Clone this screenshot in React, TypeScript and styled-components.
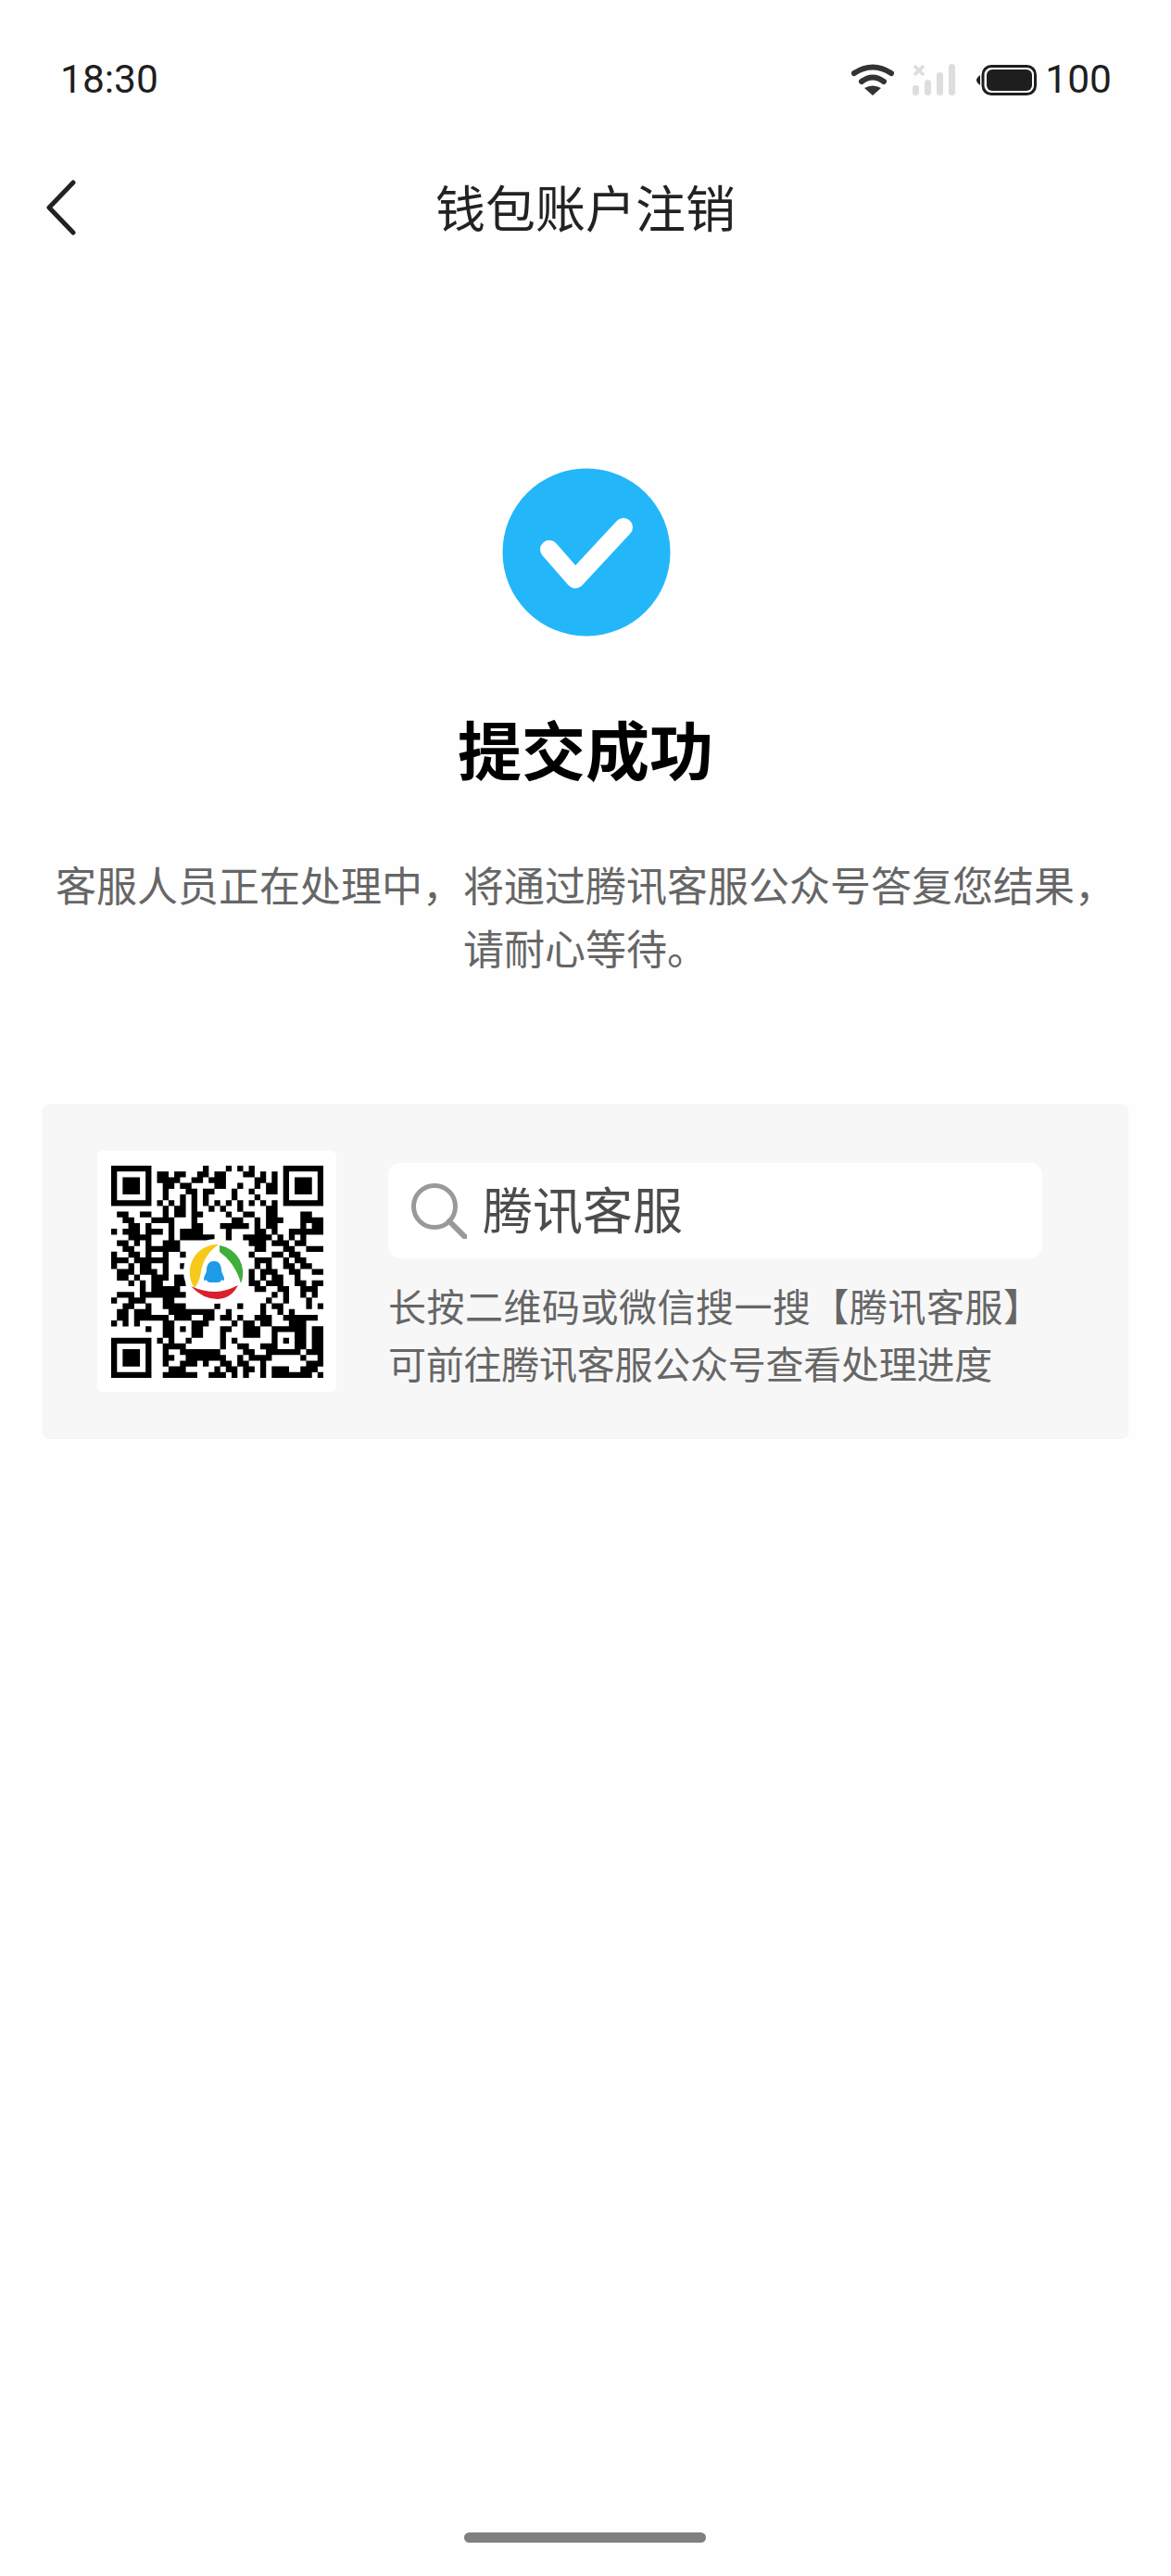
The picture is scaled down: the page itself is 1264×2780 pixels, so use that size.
import React from "react";
import styled, { createGlobalStyle } from "styled-components";

const CJK = `"Noto Sans CJK SC", "Noto Sans", sans-serif`;

const Global = createGlobalStyle`
  html, body { margin: 0; padding: 0; background: #fefefe; }
  * { box-sizing: border-box; }
`;

const Page = styled.div`
  width: 1264px;
  height: 2780px;
  display: flex;
  flex-direction: column;
  position: relative;
  background: #fefefe;
  font-family: ${CJK};
`;

const StatusBar = styled.div`
  height: 172px;
  padding: 64px 64px 64px 65px;
  display: flex;
  align-items: center;
  justify-content: space-between;
  font-family: Roboto, sans-serif;
  font-size: 42.5px;
  line-height: 44px;
  color: #1e1e1e;
`;

const StatusRight = styled.div`
  display: flex;
  align-items: center;
`;

const WifiIcon = styled.svg`
  width: 46px;
  height: 34px;
  margin-right: 19px;
`;

const SignalIcon = styled.svg`
  width: 47px;
  height: 34px;
  margin-right: 23px;
`;

const BatteryIcon = styled.svg`
  width: 65px;
  height: 33px;
  margin-right: 9px;
`;

const NavBar = styled.div`
  height: 108px;
  padding: 0 46px;
  display: grid;
  grid-template-columns: 1fr auto 1fr;
  align-items: center;
`;

const BackIcon = styled.svg`
  width: 40px;
  height: 64px;
`;

const NavTitle = styled.div`
  font-size: 54px;
  line-height: 70px;
  padding-bottom: 6px;
  color: #222;
`;

const Result = styled.div`
  display: flex;
  flex-direction: column;
  align-items: center;
  padding-top: 225px;
`;

const CheckIcon = styled.svg`
  width: 182px;
  height: 182px;
  margin-left: 2px;
`;

const ResultTitle = styled.h1`
  margin: 80px 0 0;
  font-size: 69px;
  line-height: 80px;
  font-weight: 700;
  color: #000;
`;

const ResultText = styled.p`
  margin: 73px 0 0;
  font-size: 44px;
  line-height: 68px;
  color: #666;
  text-align: center;
  white-space: nowrap;
`;

const ServiceCard = styled.div`
  margin: 136px 46px 0;
  height: 361px;
  padding: 49px 58px 0;
  display: flex;
  align-items: flex-start;
  gap: 56px;
  background: #f7f7f7;
  border: 1px solid #f4f4f4;
  border-radius: 8px;
`;

const QrFrame = styled.div`
  width: 258px;
  height: 260px;
  flex: none;
  display: flex;
  align-items: center;
  justify-content: center;
  background: #fff;
  border-radius: 6px;
`;

const QrSvg = styled.svg`
  width: 229px;
  height: 229px;
  filter: blur(0.7px);
`;

const ServiceInfo = styled.div`
  width: 706px;
  padding-top: 13px;
  display: flex;
  flex-direction: column;
  gap: 19px;
`;

const SearchBox = styled.div`
  height: 103px;
  padding: 0 0 5px 25px;
  display: flex;
  align-items: center;
  gap: 17px;
  background: #fff;
  border-radius: 14px;
`;

const SearchIcon = styled.svg`
  width: 60px;
  height: 60px;
  flex: none;
  margin-top: 5px;
`;

const SearchText = styled.span`
  font-size: 54px;
  line-height: 70px;
  color: #4c4c4c;
`;

const Hint = styled.div<{ $spacing: number }>`
  font-size: 41px;
  line-height: 62px;
  letter-spacing: ${(p) => p.$spacing}px;
  color: #666;
  white-space: nowrap;
`;

const HomeBar = styled.div`
  position: absolute;
  left: 501px;
  top: 2733px;
  width: 261px;
  height: 11px;
  border-radius: 6px;
  background: #808080;
`;

const QR_ROWS = [
  "16 20 22 24",
  "8-9 11-12 15-16 18-19 23-24 26 28",
  "8-11 14-15 17-19 25-26 28",
  "9-10 12-13 18-19 22 25 27-28",
  "9 13-14 16-17 21 24 27-28",
  "9 12 14 16 21 25",
  "8 10 12 14 16 18 20 22 24 26 28",
  "9 11-12 14 17 19 22 27-28",
  "1-2 5-6 9 11-12 14-15 20 23-24 27-28 33-34",
  "2-3 7-10 14 21-22 25 27-29 33-36",
  "3-4 6 10 14-15 19-23 25 27-28 33 35-36",
  "0 2-4 6-8 10 12-15 20 25-26 28 31-32 33-36",
  "3-6 10 12-17 20 23-27 29 31 33",
  "1-2 4 6 9-11 24-26 28-30 32-33",
  "2-3 6-11 25-26 30-31 34-36",
  "0 3-4 6 9 12 24 28-29 31-32",
  "0-2 4-9 25-27 30 32-33",
  "0 3 5-6 9 12 25 27 30-31 33-34",
  "1-3 5-7 9 24 26-28 31-32 35-36",
  "1-2 4 7-9 11-12 24 26 28-29 32",
  "3 5 7-8 11-12 24-25 27-29 32-33 35-36",
  "5 7-11 25-26 29-30 33-35",
  "1-3 5-12 28 30 33 35",
  "0 3-5 9-10 27 30 34",
  "2-3 6 9-12 18 22 26 28-29 34 36",
  "1-2 4-6 10-17 20 26 29 31",
  "1-2 4-9 11-13 16-17 19-20 22 25-27 30-35",
  "0 2 4 9-10 14-16 21 23-24 26-27 31-33",
  "6 9-10 12 14-15 19-20 23-25 33 35-36",
  "9-10 14-15 19 23-25 33 35-36",
  "8 10 13 19 21 33 35-36",
  "9-12 19 22-23 26-27 33 35-36",
  "9 12-18 23-24 27 34-36",
  "9-10 13-19 22 24-27 33 36",
  "9 12-14 16 19-20 22-23 26 34-36",
  "10-12 18 20-21 23-24 26 28-30 33-35",
  "9-14 17-19 21 23 26 28-34 36",
];

function buildQrPath(): string {
  const size = 37;
  const grid: boolean[][] = QR_ROWS.map((row) => {
    const cells = new Array<boolean>(size).fill(false);
    row.split(" ").forEach((part) => {
      const [a, b] = part.split("-").map(Number);
      for (let c = a; c <= (b ?? a); c++) cells[c] = true;
    });
    return cells;
  });
  const stamp = (x: number, y: number, n: number) => {
    for (let r = 0; r < n; r++) {
      for (let c = 0; c < n; c++) {
        const d = Math.min(r, c, n - 1 - r, n - 1 - c);
        grid[y + r][x + c] = d !== 1;
      }
    }
  };
  stamp(0, 0, 7);
  stamp(30, 0, 7);
  stamp(0, 30, 7);
  stamp(28, 28, 5);
  let d = "";
  grid.forEach((cells, y) => {
    cells.forEach((on, x) => {
      if (on) d += `M${x} ${y}h1.02v1.02h-1.02z`;
    });
  });
  return d;
}

const qrPath = buildQrPath();

const QrCode = () => (
  <QrSvg viewBox="0 0 229 229" role="img" aria-label="腾讯客服二维码">
    <g transform="scale(6.189)">
      <path d={qrPath} fill="#000" />
    </g>
    <g transform="translate(113 114)">
      <circle r="35" fill="#fff" />
      <path d="M3 -29 A30 30 0 0 0 -23 18 Q-17 10 -16 0 Q-13 -18 3 -29 Z" fill="#f7c91b" />
      <path d="M4 -28 A30 30 0 0 1 27 13 Q21 -9 4 -21 Z" fill="#3fae3b" />
      <path d="M-27 16 Q-14 30 2 30 Q17 29 24 15 Q10 22 0 22 Q-14 22 -27 16 Z" fill="#d9202c" />
      <path
        d="M-2 -11 C-8 -11 -10 -6 -10 -1 C-10 2 -13 5 -13 8 C-13 11 -11 10 -10 9 C-10 11 -8 12 -6 12 L2 12 C4 12 6 11 6 9 C7 10 9 11 9 8 C9 5 6 2 6 -1 C6 -6 4 -11 -2 -11 Z"
        fill="#1e9be6"
      />
    </g>
  </QrSvg>
);

export default function App() {
  return (
    <Page>
      <Global />
      <StatusBar>
        <span>18:30</span>
        <StatusRight>
          <WifiIcon viewBox="0 0 46 34">
            <path d="M3 10 Q23 -3 43 10" fill="none" stroke="#333" strokeWidth="6" strokeLinecap="round" />
            <path d="M11 19 Q23 10 35 19" fill="none" stroke="#333" strokeWidth="6" strokeLinecap="round" />
            <path d="M14 26 Q23 21 32 26 L23 34 Z" fill="#333" />
          </WifiIcon>
          <SignalIcon viewBox="0 0 47 34">
            <path d="M3 2 L13 12 M13 2 L3 12" stroke="#ddd" strokeWidth="3.5" />
            <rect x="1" y="23" width="7" height="11" rx="3.5" fill="#ddd" />
            <rect x="14" y="17" width="7" height="17" rx="3.5" fill="#ddd" />
            <rect x="27" y="9" width="7" height="25" rx="3.5" fill="#ddd" />
            <rect x="40" y="0" width="7" height="34" rx="3.5" fill="#ddd" />
          </SignalIcon>
          <BatteryIcon viewBox="0 0 65 33">
            <path d="M4 11 Q0 14 0 16.5 Q0 19 4 22 Z" fill="#1e1e1e" />
            <rect x="7" y="1.5" width="56.5" height="30" rx="9" fill="none" stroke="#1e1e1e" strokeWidth="3" />
            <rect x="11" y="5" width="49" height="23" rx="6" fill="#1e1e1e" />
          </BatteryIcon>
          <span>100</span>
        </StatusRight>
      </StatusBar>

      <NavBar>
        <BackIcon viewBox="0 0 40 64">
          <path d="M33 3 L7 30 L33 57" fill="none" stroke="#222" strokeWidth="5" strokeLinecap="round" strokeLinejoin="round" />
        </BackIcon>
        <NavTitle>钱包账户注销</NavTitle>
      </NavBar>

      <Result>
        <CheckIcon viewBox="0 0 182 182">
          <circle cx="91" cy="91" r="90.5" fill="#23b7f9" />
          <path d="M51 88 L79 120 L131 64" fill="none" stroke="#fff" strokeWidth="20" strokeLinecap="round" strokeLinejoin="round" />
        </CheckIcon>
        <ResultTitle>提交成功</ResultTitle>
        <ResultText>
          客服人员正在处理中，将通过腾讯客服公众号答复您结果，
          <br />
          请耐心等待。
        </ResultText>
      </Result>

      <ServiceCard>
        <QrFrame>
          <QrCode />
        </QrFrame>
        <ServiceInfo>
          <SearchBox>
            <SearchIcon viewBox="0 0 60 60">
              <circle cx="25" cy="25" r="22.5" fill="none" stroke="#999" strokeWidth="5" />
              <path d="M41 41 L58 58" stroke="#999" strokeWidth="6" strokeLinecap="round" />
            </SearchIcon>
            <SearchText>腾讯客服</SearchText>
          </SearchBox>
          <div>
            <Hint $spacing={0.5}>长按二维码或微信搜一搜【腾讯客服】</Hint>
            <Hint $spacing={-0.25}>可前往腾讯客服公众号查看处理进度</Hint>
          </div>
        </ServiceInfo>
      </ServiceCard>

      <HomeBar />
    </Page>
  );
}
